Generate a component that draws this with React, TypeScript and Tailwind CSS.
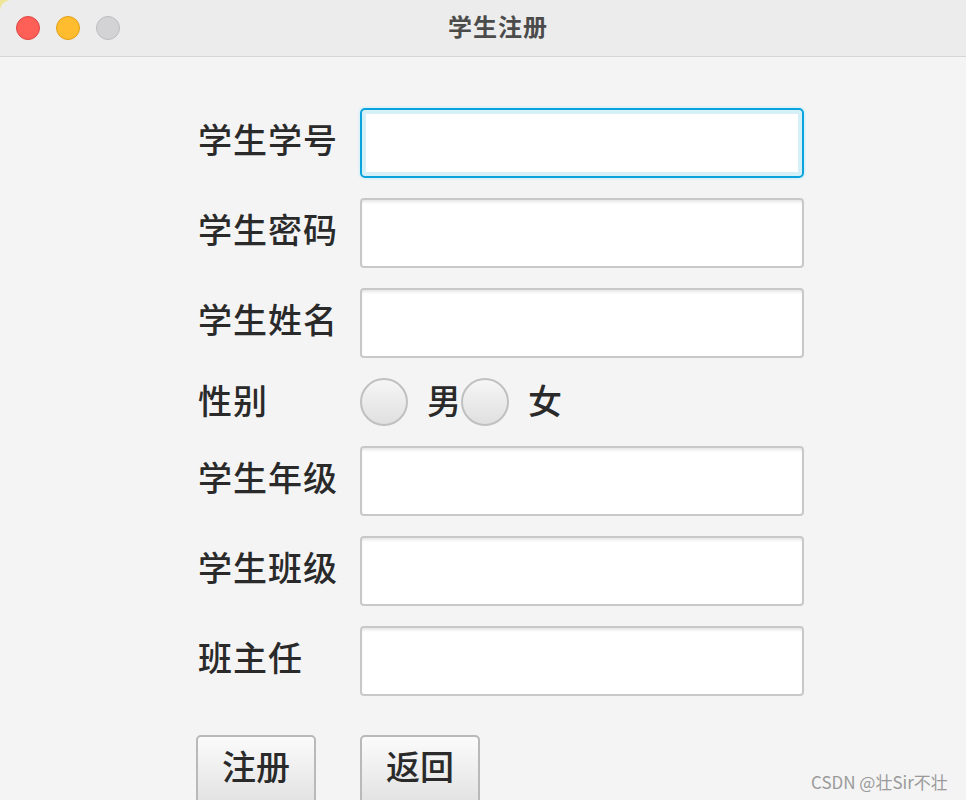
const font = { fontFamily: '"Noto Sans CJK SC", "Noto Sans", sans-serif' };

function Field({ label, focused }: { label: string; focused?: boolean }) {
  return (
    <div className="flex items-center">
      <div className="w-[162px] text-[34px] leading-none text-[#2a2a2a] font-medium tracking-[1px] -mt-[8px]">{label}</div>
      {focused ? (
        <div className="w-[444px] h-[70px] rounded-[5px] border-2 border-[#0ba3dc] p-[4px] bg-[#d6f0f8] shadow-[0_0_0_2px_#dff2f8]">
          <input className="w-full h-full bg-white outline-none" />
        </div>
      ) : (
        <input className="w-[444px] h-[70px] rounded-[4px] border-2 border-[#c8c8c8] bg-white outline-none shadow-[inset_0_3px_3px_-1px_#e6e6e6]" />
      )}
    </div>
  );
}

function Radio() {
  return (
    <span className="block w-[48px] h-[48px] rounded-full border-2 border-[#c0c0c0] bg-gradient-to-b from-[#f6f6f6] to-[#e0e0e0]" />
  );
}

export default function App() {
  return (
    <div className="w-[966px] h-[800px] bg-[#ede59a] overflow-hidden" style={font}>
      <div className="h-full rounded-tl-[12px] bg-[#f4f4f4] flex flex-col overflow-hidden">
        <div className="h-[57px] shrink-0 bg-[#ececec] border-b border-[#d6d6d6] relative flex items-center justify-center">
          <div className="absolute left-[16px] top-[16px] flex gap-[16px]">
            <span className="w-[24px] h-[24px] rounded-full bg-[#fe5f57] border border-[#e2463f]" />
            <span className="w-[24px] h-[24px] rounded-full bg-[#febc2e] border border-[#e1a116]" />
            <span className="w-[24px] h-[24px] rounded-full bg-[#d3d3d5] border border-[#bdbdbf]" />
          </div>
          <span className="ml-[30px] text-[24px] font-bold text-[#4b4b4b] tracking-[1px] -mt-[4px]">学生注册</span>
        </div>
        <div className="pl-[198px] pt-[51px] flex flex-col gap-[20px]">
          <Field label="学生学号" focused />
          <Field label="学生密码" />
          <Field label="学生姓名" />
          <div className="flex items-center h-[48px]">
            <div className="w-[162px] text-[34px] leading-none text-[#2a2a2a] font-medium tracking-[1px] -mt-[4px]">性别</div>
            <Radio />
            <span className="ml-[19px] text-[34px] leading-none text-[#2a2a2a] font-medium -mt-[4px]">男</span>
            <Radio />
            <span className="ml-[19px] text-[34px] leading-none text-[#2a2a2a] font-medium -mt-[4px]">女</span>
          </div>
          <Field label="学生年级" />
          <Field label="学生班级" />
          <Field label="班主任" />
          <div className="flex gap-[44px] mt-[19px] -ml-[2px]">
            <button className="w-[120px] h-[80px] rounded-[5px] border-2 border-[#b9b9b9] bg-gradient-to-b from-[#fbfbfb] to-[#dedede] text-[34px] font-medium text-[#2a2a2a] pb-[18px] leading-none">注册</button>
            <button className="w-[120px] h-[80px] rounded-[5px] border-2 border-[#b9b9b9] bg-gradient-to-b from-[#fbfbfb] to-[#dedede] text-[34px] font-medium text-[#2a2a2a] pb-[18px] leading-none">返回</button>
          </div>
        </div>
      </div>
      <div className="absolute left-[811px] top-[769px] text-[17px] text-[#9a9a9a]">CSDN @壮Sir不壮</div>
    </div>
  );
}
